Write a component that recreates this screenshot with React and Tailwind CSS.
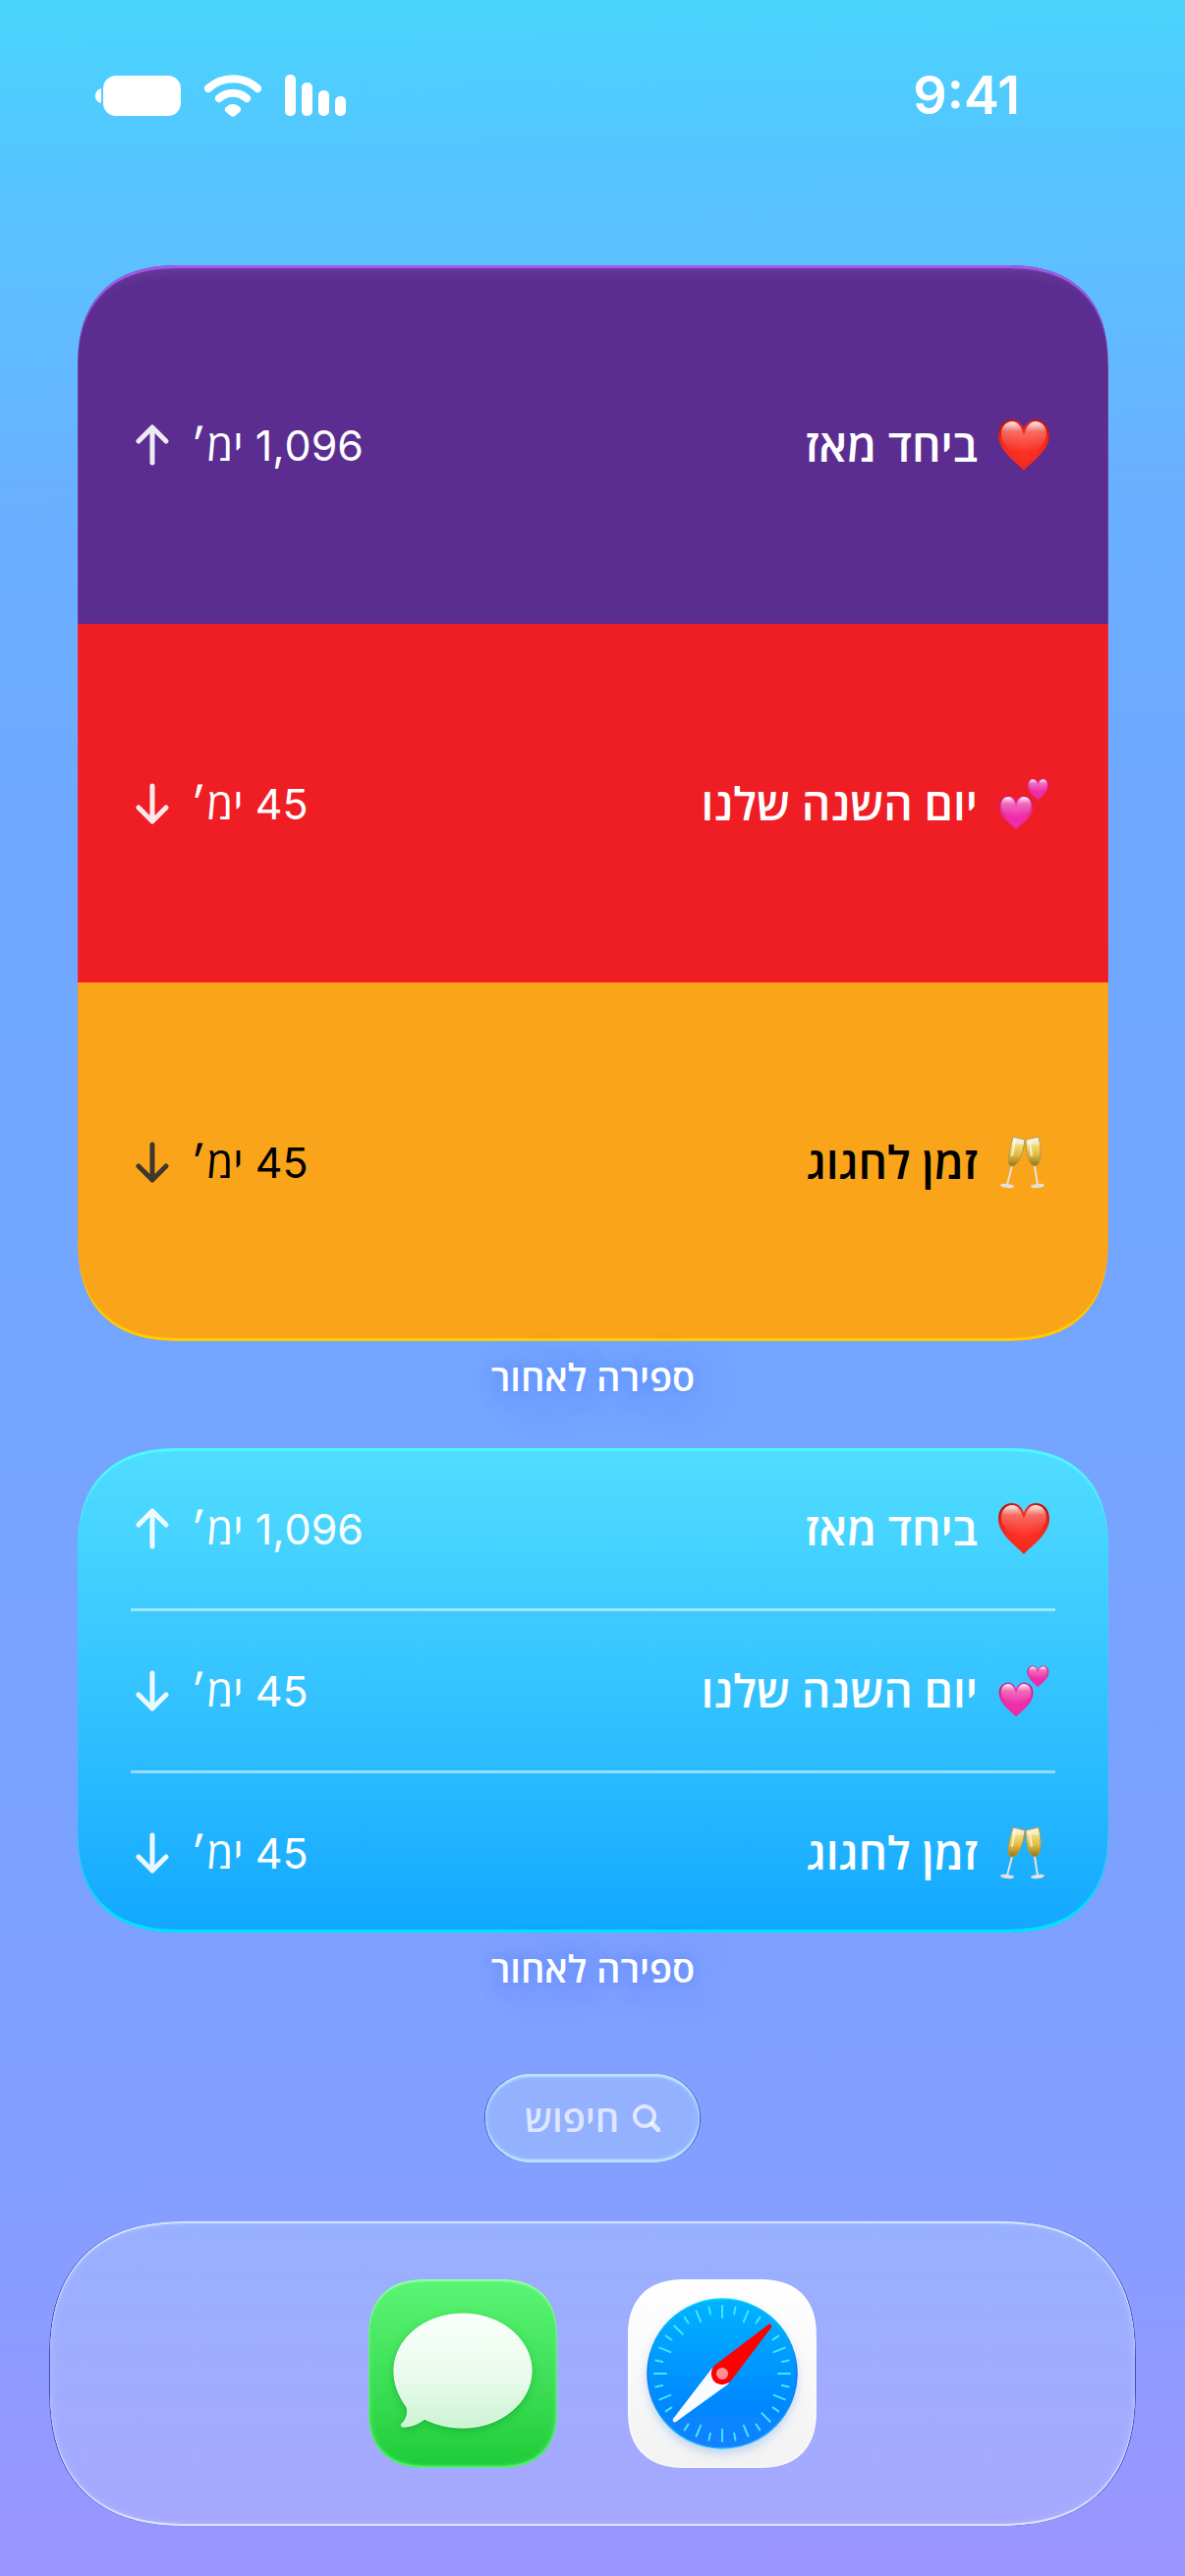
import React from 'react';

const largeRows = [
  { emoji: 'heart', title: 'ביחד מאז', count: '1,096', up: true, className: 'bg-[#5b2d91] text-white' },
  { emoji: 'hearts', title: 'יום השנה שלנו', count: '45', up: false, className: 'bg-[#ef1d24] text-white' },
  { emoji: 'glasses', title: 'זמן לחגוג', count: '45', up: false, className: 'bg-[#faa41a] text-black' },
];

const HeartShape = ({ fill }) => (
  <path
    d="M27 53C20 45 1 33 1 17C1 7 7 1 15 1C21 1 25 5 27 11C29 5 33 1 39 1C47 1 53 7 53 17C53 33 34 45 27 53Z"
    fill={fill}
  />
);

const HeartGradients = ({ id, edge, mid, light }) => (
  <defs>
    <radialGradient id={`${id}-body`} cx="0.5" cy="0.55" r="0.6">
      <stop offset="0" stopColor={light} />
      <stop offset="0.8" stopColor={mid} />
      <stop offset="1" stopColor={edge} />
    </radialGradient>
    <linearGradient id={`${id}-gloss`} x1="0" y1="0" x2="0" y2="1">
      <stop offset="0" stopColor="#fff" stopOpacity="0.95" />
      <stop offset="0.35" stopColor="#fff" stopOpacity="0.3" />
      <stop offset="1" stopColor="#fff" stopOpacity="0" />
    </linearGradient>
  </defs>
);

const HeartGloss = ({ fill }) => (
  <path d="M4 15C4 8 9 3 15 3C21 3 24 8 27 17C30 8 33 3 39 3C45 3 50 8 50 15C50 21 46 28 40 33H14C8 28 4 21 4 15Z" fill={fill} />
);

const Emoji = ({ name, id }) => {
  if (name === 'heart') {
    return (
      <svg className="size-[54px]" viewBox="0 0 54 54" aria-hidden="true">
        <HeartGradients id={id} edge="#c4130c" mid="#f0261a" light="#ff3528" />
        <HeartShape fill={`url(#${id}-body)`} />
        <HeartGloss fill={`url(#${id}-gloss)`} />
      </svg>
    );
  }
  if (name === 'hearts') {
    return (
      <svg className="size-[54px]" viewBox="0 0 54 54" aria-hidden="true">
        <HeartGradients id={id} edge="#c9147c" mid="#ea2a9c" light="#f02fae" />
        <g transform="translate(1 18) scale(0.67)">
          <HeartShape fill={`url(#${id}-body)`} />
          <HeartGloss fill={`url(#${id}-gloss)`} />
        </g>
        <g transform="translate(30 1) scale(0.42)">
          <HeartShape fill={`url(#${id}-body)`} />
          <HeartGloss fill={`url(#${id}-gloss)`} />
        </g>
      </svg>
    );
  }
  return (
    <svg className="size-[54px]" viewBox="0 0 54 54" aria-hidden="true">
      <defs>
        <linearGradient id={`${id}-wine`} x1="0" y1="0" x2="0" y2="1">
          <stop offset="0" stopColor="#f4efe2" />
          <stop offset="0.22" stopColor="#f6eec4" />
          <stop offset="0.28" stopColor="#f0dc78" />
          <stop offset="0.6" stopColor="#e3bd45" />
          <stop offset="1" stopColor="#96731a" />
        </linearGradient>
      </defs>
      <g stroke="#e6e1dc" strokeWidth="2" strokeLinecap="round">
        <path d="M15 31L10 50" />
        <path d="M38 31L41 50" />
      </g>
      <ellipse cx="10" cy="51" rx="7" ry="2" fill="#e4e0de" transform="rotate(6 10 51)" />
      <ellipse cx="41" cy="51" rx="7" ry="2" fill="#e4e0de" transform="rotate(-6 41 51)" />
      <g stroke="#b8974a" strokeWidth="1">
        <path d="M16 1L28 4C27 13 25 21 21 27C17 33 11 32 11 26C11 18 14 9 16 1Z" fill={`url(#${id}-wine)`} />
        <path d="M29 4L42 1C44 9 45 19 43 26C41 32 36 32 33 27C30 20 29 12 29 4Z" fill={`url(#${id}-wine)`} />
      </g>
      <g stroke="#fff" strokeOpacity="0.7" strokeWidth="2" fill="none" strokeLinecap="round">
        <path d="M18 5L15 20" />
        <path d="M33 7L35 20" />
      </g>
    </svg>
  );
};

const Arrow = ({ up }) => (
  <svg
    className="h-[42px] w-[34px] opacity-90"
    viewBox="0 0 34 42"
    fill="none"
    stroke="currentColor"
    strokeWidth="5"
    strokeLinecap="round"
    strokeLinejoin="round"
    aria-hidden="true"
  >
    <path d={up ? 'M17 39V3M3 17L17 3L31 17' : 'M17 3V39M3 25L17 39L31 25'} />
  </svg>
);

const CounterRow = ({ row, id, arrowClass }) => (
  <>
    <div className="flex items-center gap-5">
      <Emoji name={row.emoji} id={id} />
      <span className="text-[46px] leading-[54px] font-semibold">{row.title}</span>
    </div>
    <div className="flex items-center gap-[22px]">
      <span className="text-[43px] leading-[54px]">{row.count} ימ׳</span>
      <span className={arrowClass}>
        <Arrow up={row.up} />
      </span>
    </div>
  </>
);

const WidgetLabel = () => (
  <p className="relative mt-3 text-[38px] leading-[50px] font-semibold text-white [text-shadow:0_0_10px_rgba(60,120,255,0.3),0_4px_40px_rgba(50,120,255,0.2),0_4px_90px_rgba(40,120,255,0.3)]">
    ספירה לאחור
  </p>
);

const StatusBar = () => (
  <header className="flex h-[194px] w-full items-center justify-between px-[97px] text-white">
    <time dir="ltr" className="px-[71px] font-[Inter,sans-serif] text-[54px] leading-[60px] font-semibold">9:41</time>
    <div className="flex items-center gap-[23px]">
      <svg className="h-[42px] w-[64px]" viewBox="0 0 64 42" fill="currentColor" aria-label="Signal">
        <rect x="1" y="0" width="11" height="42" rx="5" />
        <rect x="18" y="8" width="11" height="34" rx="5" />
        <rect x="35" y="16" width="11" height="26" rx="5" />
        <rect x="52" y="22" width="11" height="20" rx="5" />
      </svg>
      <svg className="h-[43px] w-[58px]" viewBox="0 0 58 43" aria-label="Wi-Fi">
        <g fill="none" stroke="currentColor" strokeWidth="8" strokeLinecap="round">
          <path d="M4 14C18 1 40 1 54 14" />
          <path d="M15 24C23 17 35 17 43 24" />
        </g>
        <path d="M22 33C26 29 32 29 36 33C38 35 37 37 36 38L31 42C30 43 28 43 27 42L22 38C21 37 20 35 22 33Z" fill="currentColor" />
      </svg>
      <svg className="h-[41px] w-[88px]" viewBox="0 0 88 41" fill="currentColor" aria-label="Battery">
        <rect x="8" width="79" height="41" rx="13" />
        <path d="M6 13V28C2 27 0 24 0 21C0 17 2 14 6 13Z" />
      </svg>
    </div>
  </header>
);

const ticks = Array.from({ length: 32 }, (_, i) => i).filter((i) => i !== 4 && i !== 20);

const SafariIcon = () => (
  <svg className="size-full" viewBox="0 0 192 192" aria-hidden="true">
    <defs>
      <linearGradient id="safari-dial" x1="0" y1="0" x2="0" y2="1">
        <stop offset="0" stopColor="#00b4ff" />
        <stop offset="0.7" stopColor="#0088ff" />
        <stop offset="1" stopColor="#1680ff" />
      </linearGradient>
      <linearGradient id="safari-rim" x1="0" y1="0" x2="0" y2="1">
        <stop offset="0" stopColor="#00dcf5" />
        <stop offset="0.5" stopColor="#0a6ff0" />
        <stop offset="1" stopColor="#12c0ff" />
      </linearGradient>
      <filter id="safari-shadow" x="-20%" y="-20%" width="140%" height="140%">
        <feDropShadow dx="0" dy="5" stdDeviation="5" floodColor="#4a90e0" floodOpacity="0.3" />
      </filter>
    </defs>
    <circle cx="96" cy="96" r="76" fill="url(#safari-dial)" stroke="url(#safari-rim)" strokeWidth="1.5" filter="url(#safari-shadow)" />
    <g stroke="#46e4ff" strokeWidth="2" strokeLinecap="round">
      {ticks.map((i) => (
        <line key={i} x1="96" y1="27" x2="96" y2={i % 2 ? 34 : 39} transform={`rotate(${i * 11.25} 96 96)`} />
      ))}
    </g>
    <path d="M86 90L46 142C45 145 47 146 49 145L103 106Z" fill="#f8fbff" />
    <path d="M143 46L89 87C83 92 84 101 89 105C95 109 102 107 106 102L146 49C147 46 145 45 143 46Z" fill="#ff0000" />
    <circle cx="96" cy="96" r="6" fill="#ff8f92" />
  </svg>
);

const MessagesIcon = () => (
  <svg className="size-full" viewBox="0 0 192 192" aria-hidden="true">
    <defs>
      <linearGradient id="bubble" x1="0" y1="0" x2="0" y2="1">
        <stop offset="0" stopColor="#fafffb" />
        <stop offset="0.55" stopColor="#e9fbec" />
        <stop offset="1" stopColor="#ccf4d3" />
      </linearGradient>
      <filter id="bubble-shadow" x="-20%" y="-20%" width="140%" height="140%">
        <feDropShadow dx="0" dy="3" stdDeviation="4" floodColor="#089020" floodOpacity="0.4" />
      </filter>
    </defs>
    <path
      d="M96 35C135 35 166 61 166 93C166 125 135 151 96 151C82 151 69 148 57 142C51 147 43 150 35 150C33 150 33 148 34 147C39 143 41 136 39 130C31 119 26 107 26 93C26 61 57 35 96 35Z"
      fill="url(#bubble)"
      stroke="#f6fff7"
      strokeWidth="1"
      filter="url(#bubble-shadow)"
    />
  </svg>
);

const App = () => {
  return (
    <div
      dir="rtl"
      lang="he"
      className="flex min-h-screen flex-col items-center bg-[linear-gradient(179deg,#48d6fc_0%,#54c6ff_6%,#5cc1ff_10%,#69b0ff_19%,#6fa9ff_32%,#74a5ff_53%,#7aa2ff_69%,#839fff_84%,#9498ff_95%,#9c95ff_100%)] font-[Inter,'Open_Sans','Liberation_Sans',sans-serif]"
    >
      <StatusBar />

      <main className="flex w-full flex-col items-center pt-[76px] pr-[78px] pl-[79px]">
        {/* Large widget */}
        <section className="relative w-full overflow-hidden rounded-[105px] [corner-shape:superellipse(1.3)]">
          {largeRows.map((row) => (
            <div key={row.title} className={`flex h-[365px] items-center justify-between px-[59px] ${row.className}`}>
              <CounterRow row={row} id={`large-${row.emoji}`} arrowClass={row.emoji === 'glasses' ? 'text-[#2c2c2e]' : 'text-white'} />
            </div>
          ))}
          <div className="pointer-events-none absolute inset-0 rounded-[105px] shadow-[inset_0_3px_1px_#a25bea,inset_0_-3px_1px_#ffce00,inset_0_18px_14px_-12px_rgba(255,255,255,0.1)] [corner-shape:superellipse(1.3)]" />
        </section>
        <WidgetLabel />

        {/* Medium widget */}
        <section className="mt-[47px] w-full rounded-[105px] bg-linear-to-b from-[#50ddff] to-[#10a8ff] px-[54px] text-white shadow-[inset_0_3px_1px_#4cfaff,inset_0_-3px_1px_#00e6ff] [corner-shape:superellipse(1.3)]">
          {largeRows.map((row, i) => (
            <div
              key={row.title}
              className={`flex items-center justify-between px-[5px] ${i > 0 ? 'h-[165px] border-t-3 border-white/50' : 'h-[163px]'}`}
            >
              <CounterRow row={row} id={`medium-${row.emoji}`} arrowClass="text-white" />
            </div>
          ))}
        </section>
        <WidgetLabel />
      </main>

      <button
        type="button"
        className="mt-[82px] flex h-[90px] items-center gap-[14px] rounded-full bg-[#93b1ff] px-10 text-white/70 shadow-[inset_0_3px_2px_#b9e6ff,inset_0_-3px_2px_#b9e6ff,inset_0_0_8px_#a4c8ff,1px_0_0_0_rgba(50,70,190,0.8),-1px_0_0_0_rgba(50,70,190,0.8)]"
      >
        <svg className="size-7" viewBox="0 0 28 28" fill="none" stroke="currentColor" strokeLinecap="round" aria-hidden="true">
          <circle cx="12" cy="12" r="10" strokeWidth="4" />
          <path d="M20 20L26 26" strokeWidth="5" />
        </svg>
        <span className="text-[38px] leading-[50px] font-semibold">חיפוש</span>
      </button>

      {/* Dock */}
      <div className="mt-[60px] mb-[51px] w-full px-[51px]">
        <nav className="flex h-[310px] items-center justify-center gap-[72px] rounded-[142px] bg-linear-to-b from-[#98b0ff] to-[#a6a8ff] shadow-[inset_0_2px_1px_#d4e6ff,inset_0_-2px_1px_#dce6ff,inset_0_0_8px_#b4c4ff,1px_0_0_0_rgba(55,60,180,0.9),-1px_0_0_0_rgba(55,60,180,0.9)] [corner-shape:superellipse(1.3)]">
          <a
            href="#safari"
            aria-label="Safari"
            className="size-[192px] overflow-hidden rounded-[60px] bg-linear-to-b from-white to-[#f2f2f3] shadow-[inset_0_0_4px_#ffffff] [corner-shape:superellipse(1.3)]"
          >
            <SafariIcon />
          </a>
          <a
            href="#messages"
            aria-label="Messages"
            className="size-[192px] overflow-hidden rounded-[60px] bg-linear-to-b from-[#5af575] to-[#1bcc37] shadow-[inset_0_2px_2px_#9dffae,inset_0_-2px_2px_#5cf078,inset_0_0_6px_#5cf078] [corner-shape:superellipse(1.3)]"
          >
            <MessagesIcon />
          </a>
        </nav>
      </div>
    </div>
  );
};

export default App;
